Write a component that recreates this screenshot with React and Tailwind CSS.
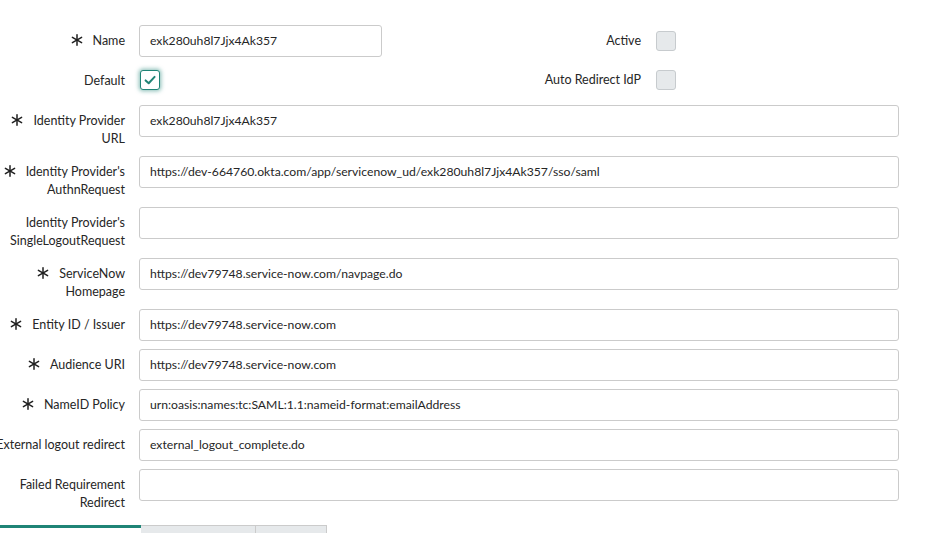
import React from 'react';

const FONT = { fontFamily: 'Lato, "Open Sans", sans-serif' };

function Req() {
  return (
    <svg viewBox="0 0 12 12" className="w-[12px] h-[12px] mr-[10px] shrink-0 inline-block align-[-1px]">
      <g stroke="#1f1f1f" strokeWidth="1.5" strokeLinecap="round">
        <line x1="6" y1="0.8" x2="6" y2="11.2" />
        <line x1="1.4" y1="3.4" x2="10.6" y2="8.6" />
        <line x1="1.4" y1="8.6" x2="10.6" y2="3.4" />
      </g>
    </svg>
  );
}

function Label({ req, lines }) {
  return (
    <div className="w-[125px] shrink-0 flex justify-end">
      <div className="text-right whitespace-nowrap text-[12.5px] leading-[18px] text-[#262626]">
        {lines.map((l, i) => (
          <div key={i}>
            {i === 0 && req && <Req />}
            {l}
          </div>
        ))}
      </div>
    </div>
  );
}

function TextInput({ value, w = 'w-[760px]' }) {
  return (
    <div className={`${w} h-[32px] border border-[#cbcbcb] rounded-[3px] bg-white pl-[10px] flex items-center text-[12.2px] text-[#262626] whitespace-nowrap overflow-hidden`}>
      {value}
    </div>
  );
}

function Box() {
  return <div className="w-[20px] h-[20px] rounded-[3px] border border-[#c7cbce] bg-[#e6e9eb]" />;
}

const ROWS = [
  { req: true, lines: ['Identity Provider', 'URL'], value: 'exk280uh8l7Jjx4Ak357', h: 'h-[51px]' },
  { req: true, lines: ["Identity Provider's", 'AuthnRequest'], value: 'https://dev-664760.okta.com/app/servicenow_ud/exk280uh8l7Jjx4Ak357/sso/saml', h: 'h-[51px]' },
  { req: false, lines: ["Identity Provider's", 'SingleLogoutRequest'], value: '', h: 'h-[51px]' },
  { req: true, lines: ['ServiceNow', 'Homepage'], value: 'https://dev79748.service-now.com/navpage.do', h: 'h-[51px]' },
  { req: true, lines: ['Entity ID / Issuer'], value: 'https://dev79748.service-now.com', h: 'h-[40px]' },
  { req: true, lines: ['Audience URI'], value: 'https://dev79748.service-now.com', h: 'h-[40px]' },
  { req: true, lines: ['NameID Policy'], value: 'urn:oasis:names:tc:SAML:1.1:nameid-format:emailAddress', h: 'h-[40px]' },
  { req: false, lines: ['External logout redirect'], value: 'external_logout_complete.do', h: 'h-[40px]' },
  { req: false, lines: ['Failed Requirement', 'Redirect'], value: '', h: 'h-[51px]' },
];

export default function App() {
  return (
    <div className="w-[949px] h-[533px] bg-white overflow-hidden pt-[25px]" style={FONT}>
      {/* Name / Active */}
      <div className="flex items-start h-[40px]">
        <div className="flex items-start gap-[14px]">
          <div className="pt-[7px]">
            <Label req lines={['Name']} />
          </div>
          <TextInput value="exk280uh8l7Jjx4Ak357" w="w-[243px]" />
        </div>
        <div className="flex items-center h-[32px] gap-[15px]">
          <div className="w-[259px] text-right text-[12.5px] text-[#262626] pt-[1px]">Active</div>
          <Box />
        </div>
      </div>

      {/* Default / Auto Redirect */}
      <div className="flex items-start h-[40px] pt-[5px]">
        <div className="flex items-center gap-[15px]">
          <div className="pt-[1px]">
            <Label lines={['Default']} />
          </div>
          <div className="w-[20px] h-[20px] rounded-[3px] border-[1.5px] border-[#1f8476] bg-white shadow-[0_0_4px_1px_rgba(31,132,118,0.55)] flex items-center justify-center">
            <svg viewBox="0 0 14 14" className="w-[14px] h-[14px]">
              <path d="M2.6 7.4 L5.7 10.2 L11.6 3.9" fill="none" stroke="#1f8476" strokeWidth="2" strokeLinecap="round" strokeLinejoin="round" />
            </svg>
          </div>
        </div>
        <div className="flex items-center h-[20px] gap-[15px] ml-[222px]">
          <div className="w-[259px] text-right text-[12.5px] text-[#262626] pt-[1px]">Auto Redirect IdP</div>
          <Box />
        </div>
      </div>

      {ROWS.map((r, i) => (
        <div key={i} className={`flex items-start gap-[14px] ${r.h}`}>
          <div className="pt-[7px]">
            <Label req={r.req} lines={r.lines} />
          </div>
          <TextInput value={r.value} />
        </div>
      ))}

      {/* Bottom tabs */}
      <div className="flex items-start mt-[5px]">
        <div className="w-[141px] h-[3px] bg-[#1f8476]" />
        <div className="w-[114px] h-[20px] bg-[#e6e9eb] border-t border-[#cbcbcb]" />
        <div className="w-[72px] h-[20px] bg-[#e6e9eb] border-t border-l border-r border-[#cbcbcb]" />
      </div>
    </div>
  );
}
